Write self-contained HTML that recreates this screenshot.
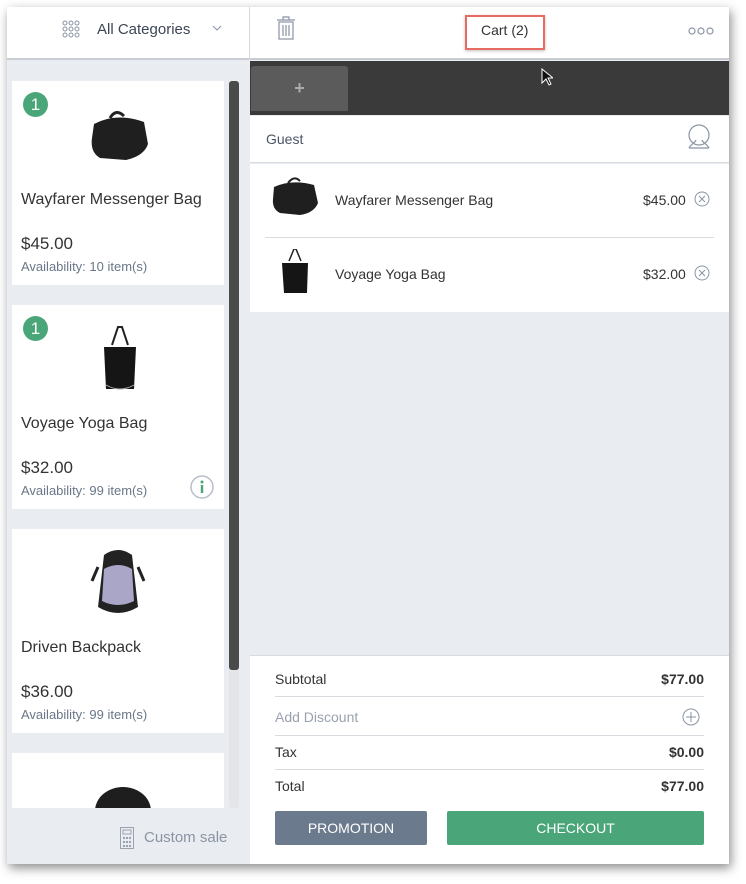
<!DOCTYPE html>
<html><head><style>
*{box-sizing:border-box;margin:0;padding:0}
body{width:746px;height:884px;background:#fff;font-family:"Liberation Sans",sans-serif;position:relative;overflow:hidden;color:#333}
.win{position:absolute;left:7px;top:7px;width:722px;height:857px;background:#e9ecf1;box-shadow:2px 4px 10px rgba(0,0,0,.45);overflow:hidden}
.abs{position:absolute}
.card{position:absolute;left:5px;width:212px;background:#fff}
.card .nm{position:absolute;left:9px;top:110px;font-size:16px;color:#333}
.card .pr{position:absolute;left:9px;top:153px;font-size:17px;color:#333}
.card .av{position:absolute;left:9px;top:178px;font-size:13px;color:#6a7788}
.badge{position:absolute;left:11px;top:11px;width:25px;height:25px;border-radius:50%;background:#4aa679;color:#fff;font-size:17px;text-align:center;line-height:25px}
.row{position:absolute;left:0;width:479px;background:#fff}
.sum{position:absolute;left:25px;width:429px;font-size:14px;color:#333}
.sum b{position:absolute;right:0;font-weight:bold;color:#333}
.line{position:absolute;left:25px;width:429px;height:1px;background:#d8dbe0}
</style></head><body>
<div class="win">
 <div class="abs" style="left:0;top:0;width:242px;height:53px;background:#fff;border-bottom:2px solid #c9ccd2"></div>
 <svg class="abs" style="left:55px;top:13px" width="18" height="18"><g fill="none" stroke="#8a94a3" stroke-width="1"><circle cx="3" cy="3" r="2"/><circle cx="9" cy="3" r="2"/><circle cx="15" cy="3" r="2"/><circle cx="3" cy="9" r="2"/><circle cx="9" cy="9" r="2"/><circle cx="15" cy="9" r="2"/><circle cx="3" cy="15" r="2"/><circle cx="9" cy="15" r="2"/><circle cx="15" cy="15" r="2"/></g></svg>
 <div class="abs" style="left:90px;top:14px;font-size:15px;color:#3d4654">All Categories</div>
 <svg class="abs" style="left:205px;top:18px" width="10" height="6"><path d="M1 1l4 4 4-4" fill="none" stroke="#8a94a3"/></svg>
 <div class="card" style="top:74px;height:204px"><div class="badge">1</div>
  <svg class="abs" style="left:74px;top:25px" width="66" height="58"><path d="M8 18 Q30 6 58 16 L62 38 Q58 50 40 54 L14 52 Q4 46 6 32Z" fill="#1f1f1f"/><path d="M24 12 Q30 2 38 10" fill="none" stroke="#222" stroke-width="3"/></svg>
  <div class="nm">Wayfarer Messenger Bag</div><div class="pr">$45.00</div><div class="av">Availability: 10 item(s)</div></div>
 <div class="card" style="top:298px;height:204px"><div class="badge">1</div>
  <svg class="abs" style="left:88px;top:20px" width="40" height="70"><path d="M12 20 L18 2 L22 2 L28 20" fill="none" stroke="#222" stroke-width="2"/><path d="M4 22 L36 22 L34 64 L6 64Z" fill="#151515"/><path d="M6 60 Q20 68 34 60" stroke="#aaa" fill="none"/></svg>
  <div class="nm">Voyage Yoga Bag</div><div class="pr">$32.00</div><div class="av">Availability: 99 item(s)</div>
  <svg class="abs" style="left:178px;top:170px" width="24" height="24"><circle cx="12" cy="12" r="11" fill="none" stroke="#b8bec8" stroke-width="1.5"/><circle cx="12" cy="7" r="1.5" fill="#4aa679"/><rect x="10.8" y="10" width="2.4" height="8" fill="#4aa679"/></svg></div>
 <div class="card" style="top:522px;height:204px">
  <svg class="abs" style="left:78px;top:18px" width="56" height="72"><path d="M14 8 Q28 -2 42 8 L48 60 Q28 72 8 60Z" fill="#222"/><path d="M14 22 Q28 14 42 22 L44 54 Q28 62 12 54Z" fill="#a9a6c8"/><path d="M8 20 L2 34 M48 20 L54 34" stroke="#222" stroke-width="3"/></svg>
  <div class="nm">Driven Backpack</div><div class="pr">$36.00</div><div class="av">Availability: 99 item(s)</div></div>
 <div class="card" style="top:746px;height:55px"><svg class="abs" style="left:76px;top:30px" width="70" height="25"><ellipse cx="35" cy="28" rx="28" ry="24" fill="#1e1e1e"/></svg></div>
 <div class="abs" style="left:222px;top:74px;width:10px;height:727px;background:#e3e5e9;border-radius:3px"></div>
 <div class="abs" style="left:222px;top:74px;width:10px;height:589px;background:#4a4a4a;border-radius:3px"></div>
 <svg class="abs" style="left:113px;top:820px" width="14" height="22"><rect x=".5" y=".5" width="13" height="21" fill="none" stroke="#9aa2ae"/><rect x="3" y="3" width="8" height="4" fill="none" stroke="#9aa2ae"/><g fill="#9aa2ae"><rect x="3" y="10" width="2" height="2"/><rect x="6" y="10" width="2" height="2"/><rect x="9" y="10" width="2" height="2"/><rect x="3" y="14" width="2" height="2"/><rect x="6" y="14" width="2" height="2"/><rect x="9" y="14" width="2" height="2"/><rect x="3" y="18" width="2" height="2"/><rect x="6" y="18" width="2" height="2"/><rect x="9" y="18" width="2" height="2"/></g></svg>
 <div class="abs" style="left:137px;top:822px;font-size:15px;color:#8a94a3">Custom sale</div>
 <div class="abs" style="left:243px;top:0;width:479px;height:857px;background:#e9ecf1">
  <div class="abs" style="left:-1px;top:0;width:1px;height:53px;background:#d5d8dd"></div>
  <div class="abs" style="left:0;top:0;width:479px;height:53px;background:#fff;border-bottom:2px solid #c9ccd2"></div>
  <svg class="abs" style="left:26px;top:9px" width="20" height="24"><g fill="none" stroke="#8a94a3" stroke-width="1.2"><path d="M1 4h18M7 4V1h6v3"/><rect x="3" y="6" width="14" height="17"/><path d="M7 9v11M10 9v11M13 9v11"/></g></svg>
  <div class="abs" style="left:215px;top:8px;width:80px;height:35px;border:2px solid #e56b63;box-shadow:0 1px 3px rgba(0,0,0,.25)"></div>
  <div class="abs" style="left:231px;top:15px;font-size:14px;color:#333">Cart (2)</div>
  <svg class="abs" style="left:438px;top:20px" width="26" height="8"><g fill="none" stroke="#8a94a3" stroke-width="1.2"><circle cx="4" cy="4" r="3"/><circle cx="13" cy="4" r="3"/><circle cx="22" cy="4" r="3"/></g></svg>
  <div class="abs" style="left:0;top:54px;width:479px;height:54px;background:#3a3a3a"></div>
  <div class="abs" style="left:1px;top:59px;width:97px;height:45px;background:#5b5b5b;border-radius:3px 3px 0 0;color:#aaa;font-size:18px;font-weight:bold;text-align:center;line-height:44px">+</div>
  <div class="row" style="top:109px;height:47px;border-bottom:1px solid #d8dbe0"></div>
  <div class="abs" style="left:16px;top:124px;font-size:14px;color:#4a5566">Guest</div>
  <svg class="abs" style="left:437px;top:117px" width="24" height="26"><g fill="none" stroke="#8a94a3" stroke-width="1.2"><circle cx="12" cy="11" r="10"/><path d="M2 24c2-4 6-5 7-8M22 24c-2-4-6-5-7-8M2 24h20"/></g></svg>
  <div class="row" style="top:157px;height:148px"></div>
  <svg class="abs" style="left:20px;top:168px" width="52" height="42"><path d="M4 12 Q22 4 44 10 L48 28 Q44 38 30 40 L10 38 Q2 34 3 24Z" fill="#1f1f1f"/><path d="M18 8 Q24 0 30 6" fill="none" stroke="#222" stroke-width="2"/></svg>
  <div class="abs" style="left:85px;top:185px;font-size:14px;color:#333">Wayfarer Messenger Bag</div>
  <div class="abs" style="left:393px;top:185px;font-size:14px;color:#333">$45.00</div>
  <svg class="abs" style="left:444px;top:184px" width="16" height="16"><g fill="none" stroke="#8a94a3"><circle cx="8" cy="8" r="7"/><path d="M5 5l6 6M11 5l-6 6"/></g></svg>
  <div class="abs" style="left:15px;top:230px;width:449px;height:1px;background:#d8dbe0"></div>
  <svg class="abs" style="left:30px;top:242px" width="30" height="50"><path d="M9 12 L14 0 L16 0 L21 12" fill="none" stroke="#222" stroke-width="1.5"/><path d="M2 14 L28 14 L27 44 L4 44Z" fill="#151515"/></svg>
  <div class="abs" style="left:85px;top:259px;font-size:14px;color:#333">Voyage Yoga Bag</div>
  <div class="abs" style="left:393px;top:259px;font-size:14px;color:#333">$32.00</div>
  <svg class="abs" style="left:444px;top:258px" width="16" height="16"><g fill="none" stroke="#8a94a3"><circle cx="8" cy="8" r="7"/><path d="M5 5l6 6M11 5l-6 6"/></g></svg>
  <div class="row" style="top:648px;height:209px;border-top:1px solid #d8dbe0"></div>
  <div class="sum" style="top:664px">Subtotal<b>$77.00</b></div>
  <div class="line" style="top:689px"></div>
  <div class="sum" style="top:702px;color:#9aa2ae">Add Discount</div>
  <svg class="abs" style="left:432px;top:701px" width="18" height="18"><g fill="none" stroke="#8a94a3"><circle cx="9" cy="9" r="8"/><path d="M9 4v10M4 9h10"/></g></svg>
  <div class="line" style="top:728px"></div>
  <div class="sum" style="top:737px">Tax<b>$0.00</b></div>
  <div class="line" style="top:762px"></div>
  <div class="sum" style="top:771px">Total<b>$77.00</b></div>
  <div class="abs" style="left:25px;top:804px;width:152px;height:34px;background:#6c7a8d;border-radius:2px;color:#fff;font-size:14px;text-align:center;line-height:34px">PROMOTION</div>
  <div class="abs" style="left:197px;top:804px;width:257px;height:34px;background:#4aa679;border-radius:2px;color:#fff;font-size:14px;text-align:center;line-height:34px">CHECKOUT</div>
 </div>
</div>
<svg class="abs" style="left:541px;top:68px" width="12" height="18"><path d="M1 1v14l4-4 3 6 2-1-3-6h5Z" fill="#111" stroke="#fff" stroke-width="1"/></svg>
</body></html>
